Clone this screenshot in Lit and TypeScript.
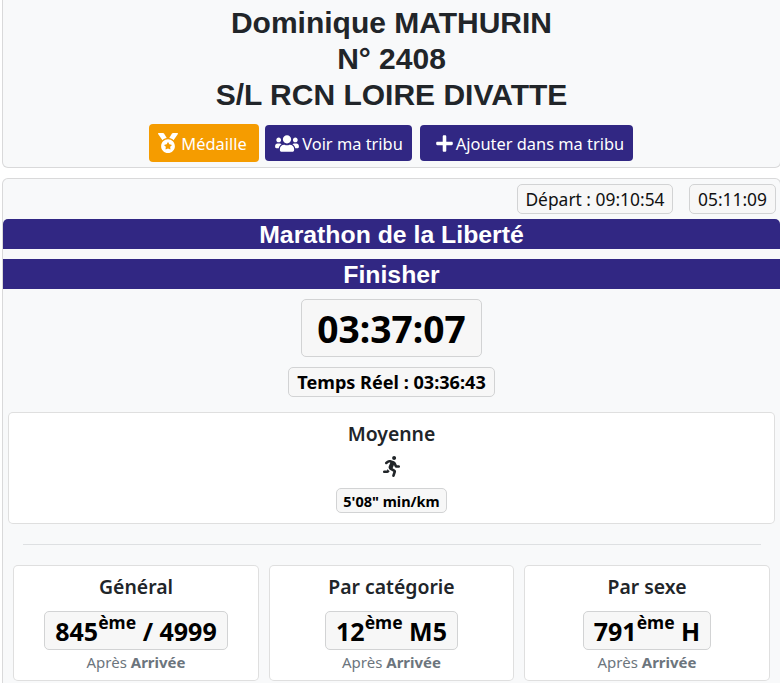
import { LitElement, html, css, svg } from "lit";
import { customElement } from "lit/decorators.js";

const icon = (vb: string, d: string) =>
  html`<svg class="ic" viewBox=${vb} fill="currentColor" aria-hidden="true">${svg`<path d=${d}></path>`}</svg>`;

const MEDAL = "M223.75 130.75L154.62 15.54A31.997 31.997 0 0 0 127.18 0H16.03C3.08 0-4.5 14.57 2.92 25.18l111.27 158.96c29.72-27.77 67.52-46.83 109.56-53.39zM495.97 0H384.82c-11.24 0-21.66 5.9-27.44 15.54l-69.13 115.21c42.04 6.56 79.84 25.62 109.56 53.38L509.08 25.18C516.5 14.57 508.92 0 495.97 0zM256 160c-97.2 0-176 78.8-176 176s78.8 176 176 176 176-78.8 176-176-78.8-176-176-176zm92.52 157.26l-37.93 36.96 8.97 52.22c1.6 9.36-8.26 16.51-16.65 12.09L256 393.88l-46.9 24.65c-8.4 4.45-18.25-2.74-16.65-12.09l8.97-52.22-37.93-36.96c-6.82-6.64-3.05-18.23 6.35-19.59l52.43-7.64 23.43-47.52c2.11-4.28 6.19-6.39 10.28-6.39 4.11 0 8.22 2.14 10.33 6.39l23.43 47.52 52.43 7.64c9.4 1.36 13.17 12.95 6.35 19.59z";
const USERS = "M96 224c35.3 0 64-28.7 64-64s-28.7-64-64-64-64 28.7-64 64 28.7 64 64 64zm448 0c35.3 0 64-28.7 64-64s-28.7-64-64-64-64 28.7-64 64 28.7 64 64 64zm32 32h-64c-17.6 0-33.5 7.1-45.1 18.6 40.3 22.1 68.9 62 75.1 109.4h66c17.7 0 32-14.3 32-32v-32c0-35.3-28.7-64-64-64zm-256 0c61.9 0 112-50.1 112-112S381.9 32 320 32 208 82.1 208 144s50.1 112 112 112zm76.8 32h-8.3c-20.8 10-43.9 16-68.5 16s-47.6-6-68.5-16h-8.3C179.6 288 128 339.6 128 403.2V432c0 26.5 21.5 48 48 48h288c26.5 0 48-21.5 48-48v-28.8c0-63.6-51.6-115.2-115.2-115.2zm-223.7-13.4C161.5 263.1 145.6 256 128 256H64c-35.3 0-64 28.7-64 64v32c0 17.7 14.3 32 32 32h65.9c6.3-47.4 34.9-87.3 75.2-109.4z";
const PLUS = "M416 208H272V64c0-17.67-14.33-32-32-32h-32c-17.67 0-32 14.33-32 32v144H32c-17.67 0-32 14.33-32 32v32c0 17.67 14.33 32 32 32h144v144c0 17.67 14.33 32 32 32h32c17.67 0 32-14.33 32-32V304h144c17.67 0 32-14.33 32-32v-32c0-17.67-14.33-32-32-32z";
const RUN = "M272 96c26.51 0 48-21.49 48-48S298.51 0 272 0s-48 21.49-48 48 21.49 48 48 48zM113.69 317.47l-14.8 34.52H32c-17.67 0-32 14.33-32 32s14.33 32 32 32h77.45c19.25 0 36.58-11.44 44.11-29.09l8.79-20.52-10.67-6.3c-17.32-10.23-30.06-25.37-37.99-42.61zM384 223.99h-44.03l-26.06-53.25c-12.5-25.55-35.45-44.23-61.78-50.94l-71.08-21.14c-28.3-6.8-57.77-.55-80.84 17.14l-39.67 30.41c-14.03 10.75-16.69 30.83-5.92 44.86s30.84 16.66 44.86 5.92l39.69-30.41c7.67-5.89 17.44-8 25.27-6.14l14.7 4.37-37.46 87.39c-12.62 29.48-1.31 64.01 26.3 80.31l84.98 50.17-27.47 87.73c-5.28 16.86 4.11 34.81 20.97 40.09 3.19 1 6.41 1.48 9.58 1.48 13.61 0 26.23-8.77 30.52-22.45l31.64-101.06c5.91-20.77-2.89-43.08-21.64-54.39l-61.24-36.14 31.31-78.28 20.27 41.43c8 16.34 24.92 26.89 43.11 26.89H384c17.67 0 32-14.33 32-32s-14.33-31.99-32-31.99z";

@customElement("app-root")
export class AppRoot extends LitElement {
  static styles = css`
    :host {
      display: block;
      height: 683px;
      overflow: hidden;
      box-sizing: border-box;
      padding-left: 2px;
      background: #fff;
      color: #212529;
      font-family: "Noto Sans", "Open Sans", sans-serif;
      font-size: 16.4px;
    }
    * { box-sizing: border-box; }
    .card {
      background: #f8f9fa;
      border: 1px solid rgba(0, 0, 0, 0.125);
      border-radius: 6px;
      width: 779px;
    }
    .head {
      height: 168px;
      margin-bottom: 10px;
      border-top-width: 0;
      border-top-left-radius: 0;
      border-top-right-radius: 0;
      padding-top: 5px;
      text-align: center;
    }
    h1 {
      margin: 0;
      font: bold 30px/36px "Liberation Sans", Arial, sans-serif;
    }
    .btns {
      display: flex;
      justify-content: center;
      align-items: center;
      margin-top: 11px;
      padding-right: 2px;
    }
    .btn {
      display: flex;
      align-items: center;
      justify-content: center;
      color: #fff;
      background: #312783;
      border-radius: 4px;
      height: 36px;
      white-space: nowrap;
    }
    .ic { height: 1em; display: block; flex: none; }
    .b1 { width: 110px; height: 38px; background: #f59c00; margin-right: 6px; gap: 3px; padding-right: 2px; }
    .b2 { width: 147px; margin-right: 8px; gap: 3px; padding-left: 2px; }
    .b3 { width: 213px; gap: 3px; padding-left: 8px; }
    .b1 .ic { width: 20px; height: 20px; }
    .b2 .ic { width: 24px; height: 19px; }
    .b3 .ic { width: 17px; height: 19px; }

    .main { height: 520px; padding-top: 5px; }
    .top {
      display: flex;
      justify-content: flex-end;
      gap: 16px;
      padding-right: 4px;
      height: 35px;
    }
    .tag {
      border: 1px solid #d2d3d4;
      border-radius: 5px;
      background: #f7f7f7;
      display: flex;
      align-items: center;
      justify-content: center;
      color: #111;
    }
    .t1 { width: 156px; height: 30px; font-size: 17.4px; }
    .t2 { width: 87px; height: 30px; font-size: 17.4px; }
    .band {
      background: #312783;
      color: #fff;
      height: 30px;
      padding-top: 1px;
      text-align: center;
      font: bold 24.8px/30px "Liberation Sans", Arial, sans-serif;
    }
    .band.r { border-radius: 5px 5px 0 0; margin-bottom: 10px; }
    .center { display: flex; flex-direction: column; align-items: center; }
    .time {
      margin-top: 10px;
      width: 181px;
      height: 58px;
      font-size: 37.2px;
      font-weight: 700;
      color: #000;
    }
    .real {
      margin-top: 10px;
      width: 207px;
      height: 30px;
      font-size: 18.1px;
      font-weight: 700;
      color: #000;
    }
    .white {
      background: #fff;
      border: 1px solid rgba(0, 0, 0, 0.125);
      border-radius: 5px;
      text-align: center;
    }
    .avg {
      margin: 15px 5px 0;
      height: 112px;
      display: flex;
      flex-direction: column;
      align-items: center;
      padding-top: 7px;
    }
    .lbl { font-size: 19.4px; font-weight: 600; line-height: 27px; }
    .avg .ic { width: 21px; height: 21px; margin-top: 9px; color: #212529; }
    .pace {
      margin-top: 11px;
      width: 111px;
      height: 25px;
      font-size: 14.5px;
      font-weight: 700;
      color: #000;
    }
    hr {
      margin: 20px 19px 20px 20px;
      border: 0;
      border-top: 1px solid #dee0e2;
    }
    .cols {
      display: grid;
      grid-template-columns: 246px 245px 246px;
      gap: 10px;
      padding-left: 10px;
    }
    .stat {
      height: 116px;
      display: flex;
      flex-direction: column;
      align-items: center;
      padding-top: 7px;
    }
    .rank {
      margin-top: 11px;
      height: 39px;
      font-size: 25px;
      font-weight: 700;
      color: #000;
      padding: 0 10px;
      white-space: pre;
    }
    .rank sup { font-size: 17.5px; line-height: 0; position: relative; top: -9px; vertical-align: baseline; }
    .after { margin-top: 2px; font-size: 15px; color: #6c757d; line-height: 21px; }
    .after b { font-weight: 700; }
  `;

  render() {
    const stats: [string, string, string][] = [
      ["Général", "845", " / 4999"],
      ["Par catégorie", "12", " M5"],
      ["Par sexe", "791", " H"],
    ];
    return html`
      <div class="card head">
        <h1>Dominique MATHURIN<br />N° 2408<br />S/L RCN LOIRE DIVATTE</h1>
        <div class="btns">
          <div class="btn b1">${icon("0 0 512 512", MEDAL)}Médaille</div>
          <div class="btn b2">${icon("0 0 640 512", USERS)}Voir ma tribu</div>
          <div class="btn b3">${icon("0 0 448 512", PLUS)}Ajouter dans ma tribu</div>
        </div>
      </div>
      <div class="card main">
        <div class="top">
          <div class="tag t1">Départ : 09:10:54</div>
          <div class="tag t2">05:11:09</div>
        </div>
        <div class="band r">Marathon de la Liberté</div>
        <div class="band">Finisher</div>
        <div class="center">
          <div class="tag time">03:37:07</div>
          <div class="tag real">Temps Réel : 03:36:43</div>
        </div>
        <div class="white avg">
          <div class="lbl">Moyenne</div>
          ${icon("0 0 416 512", RUN)}
          <div class="tag pace">5'08" min/km</div>
        </div>
        <hr />
        <div class="cols">
          ${stats.map(
            ([t, n, r]) => html`
              <div class="white stat">
                <div class="lbl">${t}</div>
                <div class="tag rank">${n}<sup>ème</sup>${r}</div>
                <div class="after">Après <b>Arrivée</b></div>
              </div>
            `
          )}
        </div>
      </div>
    `;
  }
}
